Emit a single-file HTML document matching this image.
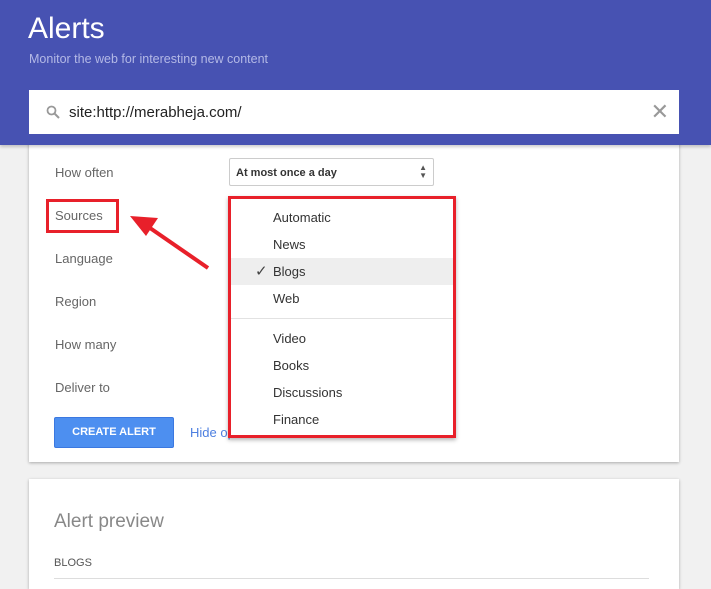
<!DOCTYPE html>
<html><head><style>
*{margin:0;padding:0;box-sizing:border-box}
body{width:711px;height:581px;overflow:hidden;background:#f1f1f1;font-family:"Liberation Sans",Arial,sans-serif;position:relative}
.hdr{position:absolute;left:0;top:0;width:711px;height:145px;background:#4752b2;box-shadow:0 2px 3px rgba(0,0,0,.2);z-index:2}
.hdr h1{position:absolute;left:28px;top:12px;font-weight:300;font-size:30px;color:#fff}
.hdr p{position:absolute;left:29px;top:52px;font-size:12.5px;color:#b4b9e6}
.search{position:absolute;left:29px;top:90px;width:650px;height:44px;background:#fff}
.search span{position:absolute;left:40px;top:14px;font-size:15px;color:#222}
.x{position:absolute;right:10px;top:9px;font-size:22px;color:#999}
.card{position:absolute;left:29px;width:650px;background:#fff;box-shadow:0 1px 3px rgba(0,0,0,.3)}
.lbl{position:absolute;left:55px;font-size:13px;color:#666;z-index:3}
.sel{position:absolute;left:229px;top:158px;width:205px;height:28px;border:1px solid #ccc;border-radius:2px;font-size:11px;font-weight:bold;color:#333;padding:8px 6px;z-index:3}
.menu{position:absolute;left:228px;top:196px;width:228px;height:242px;border:3px solid #e8202a;background:#fff;z-index:4;box-shadow:0 2px 4px rgba(0,0,0,.3)}
.it{position:absolute;left:42px;font-size:13px;color:#333}
.btn{position:absolute;left:54px;top:417px;width:120px;height:31px;background:#4d8ff0;border:1px solid #3b78e0;border-radius:2px;color:#fff;font-size:11px;font-weight:bold;text-align:center;line-height:29px;z-index:3}
</style></head><body>
<div class="hdr"><h1>Alerts</h1><p>Monitor the web for interesting new content</p>
<div class="search"><svg style="position:absolute;left:17px;top:15px" width="14" height="14" viewBox="0 0 14 14"><circle cx="5.5" cy="5.5" r="4" stroke="#999" stroke-width="1.8" fill="none"/><path d="M8.5 8.5L13 13" stroke="#999" stroke-width="2"/></svg><span>site:http://merabheja.com/</span><div class="x">✕</div></div></div>
<div class="card" style="top:140px;height:322px"></div>
<div class="card" style="top:479px;height:110px"><div style="position:absolute;left:25px;top:32px;font-size:19px;font-weight:300;color:#888">Alert preview</div><div style="position:absolute;left:25px;top:78px;font-size:11px;color:#555">BLOGS</div><div style="position:absolute;left:25px;top:99px;width:595px;height:1px;background:#ddd"></div></div>
<div class="lbl" style="top:165px">How often</div>
<div class="lbl" style="top:208px">Sources</div>
<div style="position:absolute;left:46px;top:199px;width:73px;height:34px;border:3px solid #e8202a;z-index:3"></div>
<div class="lbl" style="top:251px">Language</div>
<div class="lbl" style="top:294px">Region</div>
<div class="lbl" style="top:337px">How many</div>
<div class="lbl" style="top:380px">Deliver to</div>
<div class="sel">At most once a day<span style="position:absolute;right:6px;top:5px;font-size:8px;line-height:8px;color:#555">▲<br>▼</span></div>
<svg style="position:absolute;left:0;top:0;z-index:3" width="711" height="581"><path d="M208 268L150 228" stroke="#e8202a" stroke-width="4"/><path d="M130 216L158 218L146 236Z" fill="#e8202a"/></svg>
<div class="btn">CREATE ALERT</div>
<div style="position:absolute;left:190px;top:425px;font-size:13px;color:#4d7fe0;z-index:3">Hide options</div>
<div class="menu">
<div class="it" style="top:11px">Automatic</div>
<div class="it" style="top:38px">News</div>
<div style="position:absolute;left:0;top:59px;width:222px;height:27px;background:#eee"></div>
<div style="position:absolute;left:24px;top:63px;font-size:15px;color:#444">✓</div>
<div class="it" style="top:65px">Blogs</div>
<div class="it" style="top:92px">Web</div>
<div style="position:absolute;left:0;top:119px;width:222px;height:1px;background:#e2e2e2"></div>
<div class="it" style="top:132px">Video</div>
<div class="it" style="top:159px">Books</div>
<div class="it" style="top:186px">Discussions</div>
<div class="it" style="top:213px">Finance</div>
</div>
</body></html>
